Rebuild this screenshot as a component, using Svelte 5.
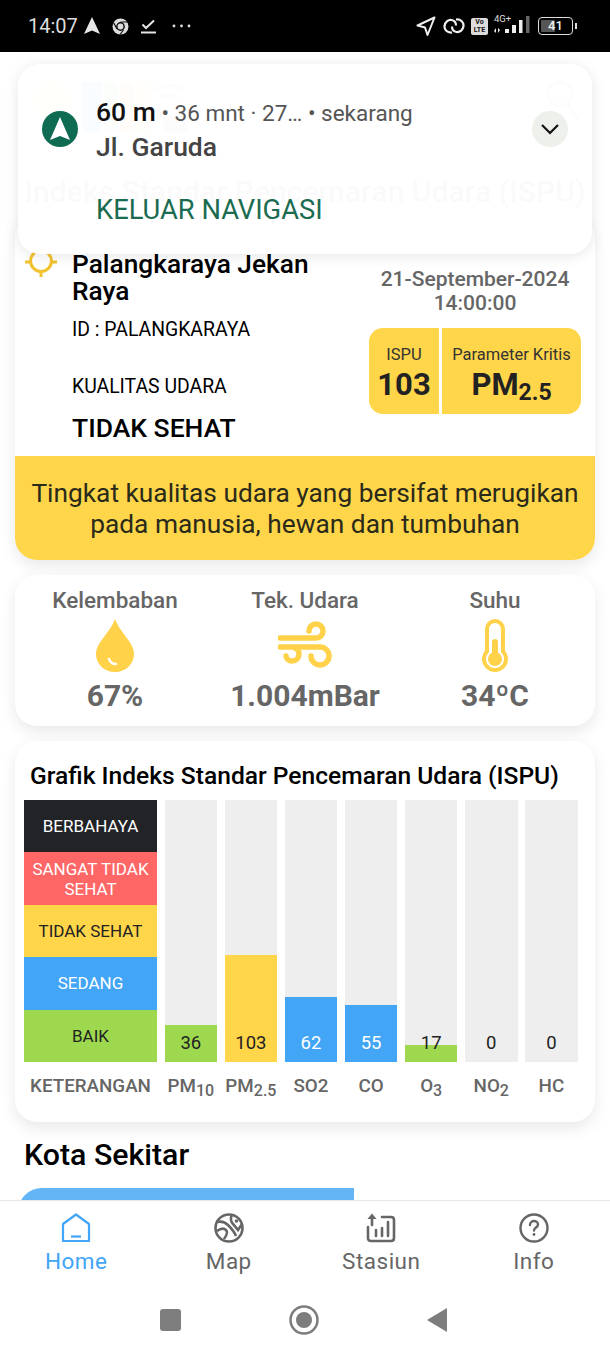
<script>
  const stats = [
    { label: 'Kelembaban', value: '67%', icon: 'drop' },
    { label: 'Tek. Udara', value: '1.004mBar', icon: 'wind' },
    { label: 'Suhu', value: '34ºC', icon: 'temp' }
  ];

  const legend = [
    { name: 'BERBAHAYA', cls: 'black' },
    { name: 'SANGAT TIDAK SEHAT', cls: 'red' },
    { name: 'TIDAK SEHAT', cls: 'yellow' },
    { name: 'SEDANG', cls: 'blue' },
    { name: 'BAIK', cls: 'green' }
  ];

  const bars = [
    { name: 'PM', sub: '10', value: 36, h: 37, cls: 'green' },
    { name: 'PM', sub: '2.5', value: 103, h: 107, cls: 'yellow' },
    { name: 'SO2', value: 62, h: 65, cls: 'blue' },
    { name: 'CO', value: 55, h: 57, cls: 'blue' },
    { name: 'O', sub: '3', value: 17, h: 17, cls: 'green' },
    { name: 'NO', sub: '2', value: 0, h: 0, cls: 'green' },
    { name: 'HC', value: 0, h: 0, cls: 'green' }
  ];

  const tabs = ['Home', 'Map', 'Stasiun', 'Info'];
</script>

<div class="phone">
  <div class="statusbar">
    <div class="status-left">
      <span class="time">14:07</span>
      <svg width="16" height="18" viewBox="0 0 16 18"><path d="M8 0 16 17 8 13.5 0 17Z" fill="#e6e6e6" /></svg>
      <svg class="chrome" width="17" height="17" viewBox="0 0 17 17">
        <circle cx="8.5" cy="8.5" r="8" fill="#ddd" />
        <circle cx="8.5" cy="8.5" r="4.4" fill="#111" />
        <circle cx="8.5" cy="8.5" r="2.9" fill="#ddd" />
        <path d="M8.5 4H16M5 11 1.5 4.5M11.5 12 8 16.5" stroke="#111" stroke-width="1.2" />
      </svg>
      <svg class="check" width="16" height="16" viewBox="0 0 16 16" fill="none" stroke="#e6e6e6" stroke-width="2">
        <path d="M1.5 6.5 5 10l8-7.5" /><path d="M0 14.500h15" />
      </svg>
      <svg class="dots" width="19" height="4" viewBox="0 0 19 4" fill="#ddd">
        <circle cx="2" cy="2" r="1.4" /><circle cx="9.5" cy="2" r="1.4" /><circle cx="17" cy="2" r="1.4" />
      </svg>
    </div>
    <div class="status-right">
      <svg width="20" height="20" viewBox="0 0 20 20" fill="none" stroke="#eee" stroke-width="2" stroke-linejoin="round">
        <path d="M18.5 1.5 1.500 9.500l7.500 2 2.500 7.500Z" />
      </svg>
      <svg class="link" width="22" height="16" viewBox="0 0 22 16" fill="none" stroke="#eee" stroke-width="2.200">
        <path d="M9 14.500C4 15 1.200 11.500 1.500 8 2 4 5 1.500 8.500 2c3 .5 4.500 3 4.500 5.500" />
        <path d="M13 1.500c5-.5 7.800 3 7.500 6.500-.5 4-3.500 6.500-7 6-3-.5-4.500-3-4.500-5.500" />
      </svg>
      <div class="volte">Vo<br />LTE</div>
      <div class="signal">
        <span class="net">4G+</span>
        <svg width="36" height="19" viewBox="0 0 36 19" fill="#eee">
          <path d="M2 12v5L0 15ZM4 17v-5l2 2Z" />
          <rect x="11" y="13" width="4" height="4" />
          <rect x="18" y="9" width="4" height="8" />
          <rect x="25" y="4" width="3.500" height="13" />
          <rect x="32" y="0" width="3.500" height="17" fill="#666" />
        </svg>
      </div>
      <div class="battery"><div class="battery-level"></div><span>41</span></div>
      <div class="battery-tip"></div>
    </div>
  </div>

  <div class="content">
    <header class="header">
      <div class="logos">
        <svg width="170" height="60" viewBox="0 0 170 60">
          <circle cx="22" cy="20" r="20" fill="#ffd54f" opacity=".8" />
          <rect x="52" y="2" width="20" height="50" fill="#42a5f5" />
          <rect x="74" y="2" width="14" height="50" fill="#66bb6a" />
          <rect x="90" y="2" width="14" height="50" fill="#ff7043" />
          <rect x="106" y="2" width="14" height="50" fill="#ffd54f" />
          <path d="M124 10c10-6 20-6 30 0M130 18c6-4 12-4 18 0" fill="none" stroke="#888" stroke-width="3" />
          <rect x="134" y="36" width="24" height="16" fill="#888" />
        </svg>
        <svg width="34" height="46" viewBox="0 0 34 46" fill="none" stroke="#888" stroke-width="3">
          <circle cx="14" cy="14" r="12" /><path d="m22 24 10 16" />
        </svg>
      </div>
      <h1>Indeks Standar Pencemaran Udara (ISPU)</h1>
    </header>

    <section class="card main-card">
      <div class="main-row">
        <svg class="sun" width="32" height="32" viewBox="0 0 32 32" fill="none" stroke="#f2c230" stroke-width="3">
          <circle cx="16" cy="14" r="10.500" /><path d="M0 15h5M27 15h5M16 25v5" />
        </svg>
        <div class="place">
          <h2>Palangkaraya Jekan Raya</h2>
          <p class="station-id">ID : PALANGKARAYA</p>
          <p class="quality-label">KUALITAS UDARA</p>
          <p class="quality">TIDAK SEHAT</p>
        </div>
        <div class="reading">
          <p class="date">21-September-2024<br />14:00:00</p>
          <div class="reading-box">
            <div class="ispu">
              <span>ISPU</span>
              <strong>103</strong>
            </div>
            <div class="critical">
              <span>Parameter Kritis</span>
              <strong>PM<sub>2.5</sub></strong>
            </div>
          </div>
        </div>
      </div>
      <p class="banner">Tingkat kualitas udara yang bersifat merugikan pada manusia, hewan dan tumbuhan</p>
    </section>

    <section class="card stats">
      {#each stats as stat}
        <div class="stat">
          <span class="stat-label">{stat.label}</span>
          {#if stat.icon === 'drop'}
            <svg width="38" height="53" viewBox="0 0 38 53">
              <path d="M19 0c2 6 6 11 11 18 5 6 8 12 8 17 0 10-8 18-19 18S0 45 0 35c0-5 3-11 8-17C13 11 17 6 19 0Z" fill="#ffd24a" />
              <path d="M13 40c1 3 4 5 7 5" fill="none" stroke="#fff" stroke-width="2.400" stroke-linecap="round" />
            </svg>
          {:else if stat.icon === 'wind'}
            <svg width="54" height="53" viewBox="0 0 54 53" fill="none" stroke="#ffd24a" stroke-width="5.500" stroke-linecap="round">
              <path d="M2 19H38a7 7 0 1 0-7-7" />
              <path d="M2 28H42a9 9 0 1 1-9 9" />
              <path d="M17 29c3 1 4 4 4 6 0 4-3 7-7 7-3 0-6-2-6-5" />
            </svg>
          {:else}
            <svg width="26" height="53" viewBox="0 0 26 53">
              <path d="M5 10a8 8 0 0 1 16 0V32.500a11 11 0 1 1-16 0Z" fill="none" stroke="#ffd24a" stroke-width="4" />
              <rect x="10" y="20" width="6" height="20" rx="3" fill="#ffd24a" />
              <circle cx="13" cy="40" r="7" fill="#ffd24a" />
            </svg>
          {/if}
          <strong class="stat-value">{stat.value}</strong>
        </div>
      {/each}
    </section>

    <section class="card chart-card">
      <h3>Grafik Indeks Standar Pencemaran Udara (ISPU)</h3>
      <div class="chart">
        <div class="legend">
          {#each legend as row}
            <div class="legend-row {row.cls}">{row.name}</div>
          {/each}
        </div>
        {#each bars as bar}
          <div class="bar">
            <div class="fill {bar.cls}" style="height: {bar.h}px"></div>
            <span class="bar-value" class:light={bar.cls === 'blue'}>{bar.value}</span>
          </div>
        {/each}
        <span class="axis-label">KETERANGAN</span>
        {#each bars as bar}
          <span class="axis-label">{bar.name}{#if bar.sub}<sub>{bar.sub}</sub>{/if}</span>
        {/each}
      </div>
    </section>

    <h2 class="nearby-title">Kota Sekitar</h2>
    <div class="nearby-card"></div>
  </div>

  <nav class="tabs">
    {#each tabs as tab, i}
      <div class="tab" class:active={i === 0}>
        {#if i === 0}
          <svg width="30" height="30" viewBox="0 0 30 30" fill="none" stroke="currentColor" stroke-width="2.200" stroke-linejoin="round">
            <path d="M15 1.500 28 11v17H2V11Z" /><path d="M10 23.500h10" />
          </svg>
        {:else if i === 1}
          <svg width="30" height="30" viewBox="0 0 30 30" fill="none" stroke="currentColor" stroke-width="2.600">
            <circle cx="15" cy="15" r="13.500" />
            <path d="M3 18c4-3 7-3 9-1 2 2 1 5-2 9M3 9c4-1 8 0 11 3 3 3 6 6 8 11" />
            <path d="M18 2c-2 3-1 7 1 9l5 6 4-6" />
            <circle cx="22.500" cy="8" r="1.800" fill="currentColor" stroke="none" />
          </svg>
        {:else if i === 2}
          <svg width="30" height="30" viewBox="0 0 30 30" fill="none" stroke="currentColor" stroke-width="2.600" stroke-linecap="round">
            <path d="M16 4h9c2 0 3 1 3 3v18c0 2-1 3-3 3H5c-2 0-3-1-3-3V14" />
            <path d="M6 12V5" />
            <path d="M6 0.500 10.500 6h-9Z" fill="currentColor" stroke="none" />
            <path d="M10 23v-6M16 23v-8M22 23V9" />
          </svg>
        {:else}
          <svg width="30" height="30" viewBox="0 0 30 30" fill="none" stroke="currentColor" stroke-width="2.400" stroke-linecap="round">
            <circle cx="15" cy="15" r="13.500" />
            <path d="M11 12c0-2.500 2-4 4-4s4 1.500 4 3.500c0 3-4 3-4 6" />
            <circle cx="15" cy="21.500" r="1.400" fill="currentColor" stroke="none" />
          </svg>
        {/if}
        <span>{tab}</span>
      </div>
    {/each}
  </nav>

  <div class="sysnav">
    <div class="sys-square"></div>
    <svg width="30" height="30" viewBox="0 0 30 30">
      <circle cx="15" cy="15" r="13.500" fill="none" stroke="#7d7d7d" stroke-width="2.500" />
      <circle cx="15" cy="15" r="8" fill="#7d7d7d" />
    </svg>
    <svg width="20" height="24" viewBox="0 0 20 24"><path d="M20 0v24L0 12Z" fill="#7d7d7d" /></svg>
  </div>

  <aside class="nav-notice">
    <div class="nav-icon">
      <svg width="20" height="24" viewBox="0 0 20 24"><path d="M10 0 20 23 10 19 0 23Z" fill="#fff" /></svg>
    </div>
    <div class="nav-text">
      <p class="nav-top"><strong>60 m</strong> • 36 mnt · 27… • sekarang</p>
      <p class="nav-street">Jl. Garuda</p>
      <p class="nav-action">KELUAR NAVIGASI</p>
    </div>
    <div class="nav-chevron">
      <svg width="20" height="12" viewBox="0 0 20 12" fill="none" stroke="#111" stroke-width="2.200"><path d="m2 2 8 8 8-8" /></svg>
    </div>
  </aside>
</div>

<style>
  :global(body) {
    margin: 0;
    background: #fff;
  }

  .phone {
    position: relative;
    width: 610px;
    height: 1356px;
    display: flex;
    flex-direction: column;
    overflow: hidden;
    background: #fff;
    font-family: Roboto, "Liberation Sans", sans-serif;
    color: #000;
  }

  p, h1, h2, h3 {
    margin: 0;
  }

  .statusbar {
    flex: none;
    height: 52px;
    background: #000;
    display: flex;
    align-items: center;
    justify-content: space-between;
    padding: 0 33px 0 28px;
    box-sizing: border-box;
    color: #ddd;
  }

  .status-left, .status-right {
    display: flex;
    align-items: center;
  }

  .time {
    font-size: 20px;
    margin-right: 6px;
  }

  .chrome {
    margin-left: 12px;
  }

  .check {
    margin-left: 12px;
  }

  .dots {
    margin-left: 15px;
  }

  .link {
    margin-left: 7px;
  }

  .volte {
    margin-left: 6px;
    width: 17px;
    height: 17px;
    background: #ddd;
    border-radius: 2px;
    color: #111;
    font-size: 7px;
    font-weight: 700;
    line-height: 8px;
    text-align: center;
  }

  .signal {
    position: relative;
    margin-left: 6px;
    width: 36px;
    height: 20px;
  }

  .net {
    position: absolute;
    left: 0;
    top: -3px;
    font-size: 9.500px;
    color: #ddd;
  }

  .battery {
    position: relative;
    margin-left: 8px;
    width: 33px;
    height: 16px;
    border: 1.500px solid #ddd;
    border-radius: 4px;
    font-size: 13px;
    font-weight: 500;
    line-height: 16px;
    text-align: center;
    color: #eee;
  }

  .battery span {
    position: relative;
  }

  .battery-level {
    position: absolute;
    left: 2px;
    top: 2px;
    bottom: 2px;
    width: 14px;
    background: #555;
    border-radius: 1px;
  }

  .battery-tip {
    margin-left: 2px;
    width: 2px;
    height: 6px;
    background: #ddd;
  }

  .content {
    flex: none;
    height: 1148px;
    overflow: hidden;
  }

  .header {
    height: 163px;
    box-sizing: border-box;
    padding: 28px 0 0;
  }

  .logos {
    display: flex;
    justify-content: space-between;
    padding: 0 30px 0 30px;
    height: 60px;
  }

  .header h1 {
    margin-top: 35px;
    font-size: 30.200px;
    font-weight: 500;
    line-height: 34px;
    text-align: center;
    white-space: nowrap;
    color: #444;
  }

  .card {
    margin: 0 15px;
    background: #fff;
    border-radius: 22px;
    box-shadow: 0 6px 16px rgba(0, 0, 0, 0.09);
  }

  .main-card {
    overflow: hidden;
  }

  .main-row {
    display: flex;
    height: 241px;
    padding-top: 36px;
    box-sizing: border-box;
  }

  .sun {
    flex: none;
    margin: -4px 0 0 10px;
  }

  .place {
    flex: none;
    width: 270px;
    margin-left: 15px;
  }

  .place h2 {
    font-size: 26.300px;
    font-weight: 500;
    line-height: 27px;
  }

  .station-id {
    margin-top: 13px;
    font-size: 19.400px;
    line-height: 24px;
  }

  .quality-label {
    margin-top: 33px;
    font-size: 19.400px;
    line-height: 24px;
  }

  .quality {
    margin-top: 12px;
    font-size: 26.500px;
    font-weight: 500;
    line-height: 34px;
  }

  .reading {
    flex: none;
    width: 212px;
    margin-left: 27px;
  }

  .date {
    margin-top: 16px;
    font-size: 21px;
    font-weight: 500;
    line-height: 24px;
    text-align: center;
    color: #666;
  }

  .reading-box {
    margin-top: 13px;
    height: 86px;
    display: flex;
    background: #ffd54a;
    border-radius: 14px;
    text-align: center;
  }

  .ispu {
    width: 70px;
    border-right: 3px solid #fff;
  }

  .critical {
    flex: 1;
  }

  .reading-box span {
    display: block;
    margin-top: 17px;
    font-size: 16.500px;
    line-height: 20px;
    color: #333;
  }

  .reading-box strong {
    display: block;
    margin-top: 1px;
    font-size: 31px;
    font-weight: 700;
    line-height: 38px;
    color: #222;
  }

  .reading-box sub {
    font-size: 23px;
    line-height: 0;
    vertical-align: -5px;
  }

  .banner {
    height: 104px;
    box-sizing: border-box;
    padding: 22px 4px 0;
    background: #ffd54a;
    font-size: 26.300px;
    line-height: 31px;
    text-align: center;
    color: #2a2a1a;
  }

  .stats {
    margin-top: 15px;
    height: 151px;
    padding: 0 5px;
    display: grid;
    grid-template-columns: repeat(3, 1fr);
    box-sizing: border-box;
  }

  .stat {
    display: flex;
    flex-direction: column;
    align-items: center;
    padding-top: 12px;
    color: #666;
  }

  .stat svg {
    margin-top: 6px;
    flex: none;
  }

  .stat-label {
    font-size: 22.500px;
    font-weight: 500;
    line-height: 26px;
  }

  .stat-value {
    margin-top: 6px;
    font-size: 30px;
    font-weight: 700;
    line-height: 36px;
  }

  .chart-card {
    margin-top: 15px;
    height: 381px;
    padding: 21px 9px 0;
    box-sizing: border-box;
  }

  .chart-card h3 {
    margin-left: 6px;
    font-size: 24.600px;
    font-weight: 500;
    line-height: 28px;
    white-space: nowrap;
  }

  .chart {
    margin-top: 10px;
    display: grid;
    grid-template-columns: 133px repeat(7, 52.600px);
    grid-template-rows: 262px auto;
    column-gap: 7.500px;
  }

  .legend {
    display: grid;
    grid-template-rows: repeat(5, 1fr);
  }

  .legend-row {
    display: flex;
    align-items: center;
    justify-content: center;
    padding: 0 4px;
    font-size: 17px;
    line-height: 20px;
    text-align: center;
  }

  .black { background: #212327; color: #fff; }
  .red { background: #ff6666; color: #fff; }
  .yellow { background: #ffd54a; color: #222; }
  .blue { background: #42a5f5; color: #fff; }
  .green { background: #9dd84f; color: #222; }

  .bar {
    position: relative;
    background: #eee;
    display: flex;
    flex-direction: column;
    justify-content: flex-end;
  }

  .bar-value {
    position: absolute;
    left: 0;
    right: 0;
    bottom: 8px;
    font-size: 18.500px;
    line-height: 22px;
    text-align: center;
    color: #222;
  }

  .bar-value.light {
    color: #fff;
  }

  .axis-label {
    margin-top: 11px;
    font-size: 18.800px;
    font-weight: 500;
    line-height: 26px;
    text-align: center;
    white-space: nowrap;
    color: #666;
  }

  .axis-label sub {
    font-size: 16px;
    line-height: 0;
    vertical-align: -4px;
  }

  .nearby-title {
    margin: 15px 0 0 24px;
    font-size: 30.300px;
    font-weight: 500;
    line-height: 36px;
  }

  .nearby-card {
    margin: 15px 0 0 18px;
    width: 336px;
    height: 40px;
    background: #64b5f6;
    border-radius: 24px 0 0 0;
  }

  .tabs {
    flex: none;
    height: 90px;
    display: grid;
    grid-template-columns: repeat(4, 152.500px);
    border-top: 1px solid #e8e8e8;
    box-sizing: border-box;
  }

  .tab {
    display: flex;
    flex-direction: column;
    align-items: center;
    padding-top: 12px;
    color: #666;
    font-size: 22.500px;
    line-height: 30px;
    letter-spacing: 0.5px;
  }

  .tab.active {
    color: #42a5f5;
  }

  .tab svg {
    margin-bottom: 3px;
  }

  .sysnav {
    flex: none;
    height: 66px;
    padding: 15px 4px 0 0;
    box-sizing: border-box;
    display: flex;
    align-items: flex-start;
    justify-content: center;
    gap: 108px;
  }

  .sys-square {
    width: 21px;
    height: 22px;
    margin-top: 4px;
    background: #7d7d7d;
    border-radius: 3px;
  }

  .sysnav svg:last-child {
    margin-top: 3px;
  }

  /* heads-up notification lies over the page */
  .nav-notice {
    position: absolute;
    left: 18px;
    top: 64px;
    width: 574px;
    height: 190px;
    box-sizing: border-box;
    padding: 47px 24px 0;
    display: flex;
    background: rgba(255, 255, 255, 0.975);
    border-radius: 22px;
    box-shadow: 0 2px 14px rgba(0, 0, 0, 0.1);
  }

  .nav-icon {
    flex: none;
    width: 36px;
    height: 36px;
    background: #0f6b52;
    border-radius: 50%;
    display: flex;
    align-items: center;
    justify-content: center;
  }

  .nav-text {
    flex: 1;
    margin: -16px 0 0 18px;
  }

  .nav-top {
    font-size: 22.500px;
    line-height: 34px;
    color: #555;
    white-space: nowrap;
  }

  .nav-top strong {
    font-size: 26.500px;
    font-weight: 500;
    color: #111;
  }

  .nav-street {
    margin-top: 2px;
    font-size: 26.500px;
    font-weight: 500;
    line-height: 30px;
    color: #444;
  }

  .nav-action {
    margin-top: 32px;
    font-size: 27.300px;
    line-height: 32px;
    color: #1a6b50;
  }

  .nav-chevron {
    flex: none;
    width: 36px;
    height: 36px;
    background: #eef0ec;
    border-radius: 50%;
    display: flex;
    align-items: center;
    justify-content: center;
  }
</style>
